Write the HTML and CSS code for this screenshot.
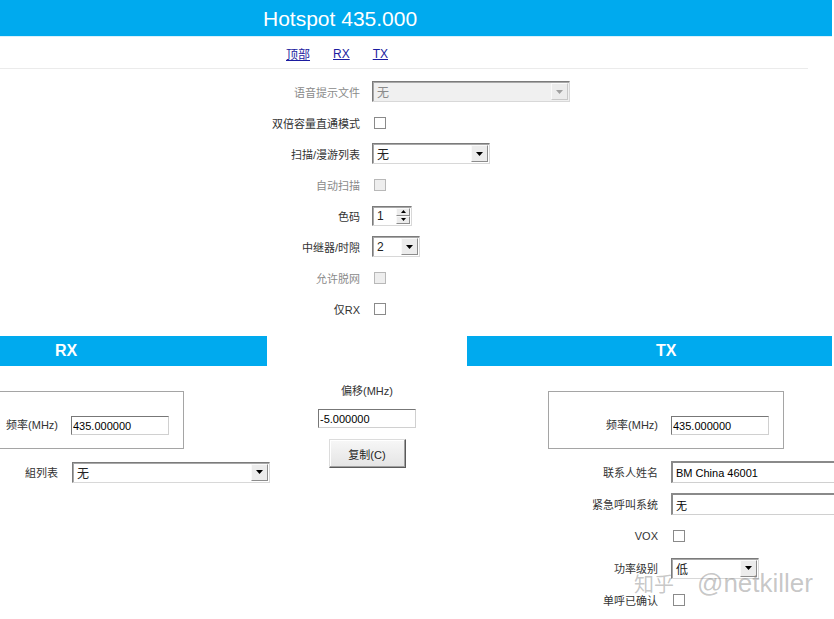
FILE: index.html
```html
<!DOCTYPE html>
<html lang="zh-CN">
<head>
    <meta charset="UTF-8">
    <title>Hotspot 435.000</title>
    <link rel="stylesheet" href="styles.css">
</head>
<body>
    <div class="topbar">
        <h1>Hotspot 435.000</h1>
    </div>

    <nav class="jump">
        <a href="#top">顶部</a>
        <a href="#rx">RX</a>
        <a href="#tx">TX</a>
    </nav>

    <div class="general">
        <label class="lbl off">语音提示文件</label>
        <span class="combo off w-voice"><span class="combo-val">无</span><span class="combo-btn"><svg width="7" height="4" viewBox="0 0 7 4"><path d="M0 0h7L3.5 4z" fill="#a0a0a0"/></svg></span></span>

        <label class="lbl">双倍容量直通模式</label>
        <input type="checkbox" class="chk">

        <label class="lbl">扫描/漫游列表</label>
        <span class="combo w-scan"><span class="combo-val">无</span><span class="combo-btn"><svg width="7" height="4" viewBox="0 0 7 4"><path d="M0 0h7L3.5 4z" fill="#000"/></svg></span></span>

        <label class="lbl off">自动扫描</label>
        <input type="checkbox" class="chk" disabled>

        <label class="lbl">色码</label>
        <span class="spin">
            <span class="spin-val">1</span>
            <span class="spin-btns">
                <span class="spin-btn"><svg width="5" height="3" viewBox="0 0 5 3"><path d="M0 3h5L2.5 0z" fill="#000"/></svg></span>
                <span class="spin-btn"><svg width="5" height="3" viewBox="0 0 5 3"><path d="M0 0h5L2.5 3z" fill="#000"/></svg></span>
            </span>
        </span>

        <label class="lbl">中继器/时隙</label>
        <span class="combo w-slot"><span class="combo-val">2</span><span class="combo-btn"><svg width="7" height="4" viewBox="0 0 7 4"><path d="M0 0h7L3.5 4z" fill="#000"/></svg></span></span>

        <label class="lbl off">允许脱网</label>
        <input type="checkbox" class="chk" disabled>

        <label class="lbl">仅RX</label>
        <input type="checkbox" class="chk">
    </div>

    <div class="split">
        <section class="side rx" id="rx">
            <h2 class="bar">RX</h2>
            <div class="freqbox">
                <label>频率(MHz)</label>
                <input type="text" class="txt" value="435.000000">
            </div>
            <div class="fields">
                <label class="lbl">組列表</label>
                <span class="combo w-group"><span class="combo-val">无</span><span class="combo-btn"><svg width="7" height="4" viewBox="0 0 7 4"><path d="M0 0h7L3.5 4z" fill="#000"/></svg></span></span>
            </div>
        </section>

        <section class="mid">
            <label>偏移(MHz)</label>
            <input type="text" class="txt" value="-5.000000">
            <button class="btn">复制(C)</button>
        </section>

        <section class="side tx" id="tx">
            <h2 class="bar">TX</h2>
            <div class="freqbox">
                <label>频率(MHz)</label>
                <input type="text" class="txt" value="435.000000">
            </div>
            <div class="fields">
                <label class="lbl">联系人姓名</label>
                <input type="text" class="txt wide" value="BM China 46001">

                <label class="lbl">紧急呼叫系统</label>
                <input type="text" class="txt wide" value="无">

                <label class="lbl">VOX</label>
                <input type="checkbox" class="chk">

                <label class="lbl">功率级别</label>
                <span class="combo w-power"><span class="combo-val">低</span><span class="combo-btn"><svg width="7" height="4" viewBox="0 0 7 4"><path d="M0 0h7L3.5 4z" fill="#000"/></svg></span></span>

                <label class="lbl">单呼已确认</label>
                <input type="checkbox" class="chk">
            </div>
        </section>
    </div>

    <div class="watermark"><span class="wm-zh">知乎</span>@netkiller</div>
</body>
</html>
```

FILE: styles.css
```css
* {
    box-sizing: border-box;
}
html, body {
    margin: 0;
    overflow: hidden;
}
body {
    font-family: "Liberation Sans", Arial, "Noto Sans CJK SC", sans-serif;
    font-size: 11px;
    color: #222;
    background: #fff;
    width: 834px;
    height: 619px;
    position: relative;
}
.topbar {
    width: 832px;
    height: 36px;
    background: #00aaee;
    color: #fff;
    padding-left: 263px;
    box-shadow: 0 1px 0 #d9f1fb;
}
.topbar h1 {
    margin: 0;
    font-weight: normal;
    font-size: 21px;
    line-height: 37px;
}
.jump {
    width: 808px;
    height: 33px;
    border-bottom: 1px solid #ebebeb;
    display: flex;
    align-items: center;
    gap: 23px;
    padding: 3px 0 0 286px;
    font-size: 12px;
}
.jump a {
    color: #1c1ca0;
    text-decoration: underline;
}
.general {
    display: grid;
    grid-template-columns: 360px auto;
    column-gap: 12px;
    grid-auto-rows: 31px;
    align-items: center;
    justify-items: start;
    padding-top: 7px;
}
.lbl {
    justify-self: end;
    color: #333;
}
.lbl.off {
    color: #8a8a8a;
}
.combo {
    display: flex;
    align-items: center;
    height: 21px;
    padding: 1px;
    background: #fff;
    border: 1px solid;
    border-color: #7b7b7b #d8d8d8 #d8d8d8 #7b7b7b;
    box-shadow: inset 1px 1px 0 #a8a8a8;
}
.combo.off {
    background: #f0f0f0;
    color: #8a8a8a;
}
.combo-val {
    flex: 1;
    padding-left: 3px;
    font-size: 12px;
}
.combo-btn {
    width: 17px;
    height: 17px;
    background: #ececec;
    border: 1px solid;
    border-color: #fafafa #8c8c8c #8c8c8c #fafafa;
    display: flex;
    align-items: center;
    justify-content: center;
}
.combo.off .combo-btn {
    border-color: #fafafa #c8c8c8 #c8c8c8 #fafafa;
}
.w-voice { width: 198px; }
.w-scan { width: 118px; }
.w-slot { width: 48px; }
.w-group { width: 198px; }
.w-power { width: 88px; }
.spin {
    display: flex;
    width: 40px;
    height: 20px;
    padding: 1px;
    background: #fff;
    border: 1px solid;
    border-color: #7b7b7b #d8d8d8 #d8d8d8 #7b7b7b;
    box-shadow: inset 1px 1px 0 #a8a8a8;
}
.spin-val {
    flex: 1;
    padding-left: 3px;
    font-size: 12px;
    line-height: 17px;
}
.spin-btns {
    display: flex;
    flex-direction: column;
    width: 14px;
}
.spin-btn {
    flex: 1;
    background: #ececec;
    border: 1px solid;
    border-color: #fafafa #8c8c8c #8c8c8c #fafafa;
    display: flex;
    align-items: center;
    justify-content: center;
}
.chk {
    appearance: none;
    -webkit-appearance: none;
    width: 12px;
    height: 12px;
    margin: 0 0 0 2px;
    background: #fff;
    border: 1px solid #8a8a8a;
}
.chk:disabled {
    background: #eee;
    border-color: #b8b8b8;
}
.txt {
    width: 98px;
    height: 19px;
    margin: 0;
    padding: 0 1px;
    font: 11px "Liberation Sans", Arial, "Noto Sans CJK SC", sans-serif;
    color: #000;
    background: #fff;
    border: 1px solid;
    border-color: #777 #d0d0d0 #d0d0d0 #777;
    outline: none;
}
.txt.wide {
    width: 200px;
    height: 22px;
    border-width: 2px 1px 1px 2px;
    border-color: #8a8a8a #d0d0d0 #d0d0d0 #8a8a8a;
    padding-left: 3px;
}
.split {
    display: grid;
    grid-template-columns: 267px 200px 365px;
    margin-top: 12px;
}
.bar {
    margin: 0;
    height: 30px;
    background: #00aaee;
    color: #fff;
    font-size: 16px;
    font-weight: bold;
    line-height: 30px;
}
.rx .bar {
    padding-left: 55px;
}
.tx .bar {
    padding-left: 189px;
}
.freqbox {
    width: 236px;
    height: 58px;
    margin-top: 25px;
    border: 1px solid #a5a5a5;
    display: flex;
    justify-content: flex-end;
    align-items: flex-end;
    gap: 13px;
    padding: 0 14px 13px 0;
}
.freqbox label {
    line-height: 19px;
    color: #333;
}
.rx .freqbox {
    margin-left: -52px;
}
.tx .freqbox {
    margin-left: 81px;
}
.fields {
    display: grid;
    grid-auto-rows: 32px;
    align-items: center;
    justify-items: start;
    margin-top: 7px;
}
.rx .fields {
    grid-template-columns: 58px auto;
    column-gap: 14px;
}
.tx .fields {
    grid-template-columns: 191px auto;
    column-gap: 13px;
}
.mid {
    display: flex;
    flex-direction: column;
    align-items: center;
    padding-top: 48px;
}
.mid label {
    line-height: 14px;
    color: #333;
}
.mid .txt {
    margin-top: 11px;
}
.btn {
    margin-top: 11px;
    width: 77px;
    height: 29px;
    font: 11px "Liberation Sans", Arial, "Noto Sans CJK SC", sans-serif;
    color: #222;
    background: linear-gradient(#f7f7f7, #e4e4e4);
    border: 1px solid;
    border-color: #dcdcdc #5a5a5a #5a5a5a #dcdcdc;
    box-shadow: inset -1px -1px 0 #a0a0a0, inset 1px 1px 0 #fff;
}
.watermark {
    position: absolute;
    left: 634px;
    top: 567px;
    font-size: 26px;
    line-height: 32px;
    color: rgba(130, 130, 130, 0.45);
    white-space: nowrap;
}
.wm-zh {
    font-family: "Noto Sans CJK SC", sans-serif;
    font-size: 20px;
    margin-right: 23px;
}
```
